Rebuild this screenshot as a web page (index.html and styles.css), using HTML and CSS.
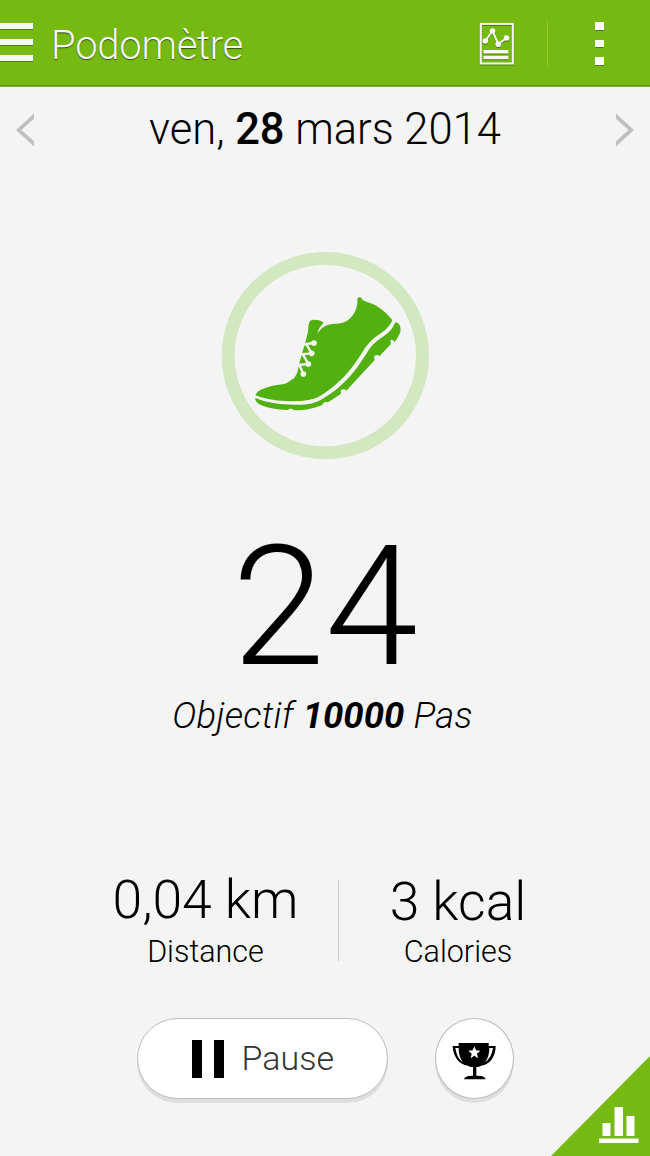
FILE: index.html
```html
<!DOCTYPE html>
<html lang="fr">
<head>
  <meta charset="UTF-8" />
  <meta name="viewport" content="width=device-width, initial-scale=1.0" />
  <title>Podomètre</title>
  <link rel="stylesheet" href="styles.css">
</head>
<body>
  <div class="app">
    <header class="topbar">
      <div class="menu"><span></span><span></span><span></span></div>
      <h1>Podomètre</h1>
      <svg class="log" width="36" height="46" viewBox="0 0 36 46">
        <g fill="none" stroke="#f7f7f7">
          <rect x="1.800" y="1.900" width="32" height="39.600" stroke-width="2"/>
          <path d="M6.300 19l7.200-10 5.700 13 8.300-6" stroke-width="1.900"/>
        </g>
        <g fill="#f7f7f7">
          <circle cx="6.300" cy="19" r="2.800"/>
          <circle cx="13.500" cy="9" r="2.800"/>
          <circle cx="19.200" cy="22.200" r="2.800"/>
          <circle cx="27.500" cy="16" r="2.800"/>
          <rect x="4.400" y="28" width="25" height="3.500"/>
          <rect x="4.400" y="33.800" width="25" height="3.400"/>
        </g>
      </svg>
      <span class="sep"></span>
      <div class="more"><span></span><span></span><span></span></div>
    </header>

    <div class="date">
      <svg width="19" height="34" viewBox="0 0 19 34"><path d="M18 0.500v5.200L5.500 17 18 28.300v5.200L0 17z" fill="#c0c0c0"/></svg>
      <p>ven, <b>28</b> mars 2014</p>
      <svg width="19" height="34" viewBox="0 0 19 34"><path d="M1 0.500v5.200l12.500 11.300L1 28.300v5.200L19 17z" fill="#c0c0c0"/></svg>
    </div>

    <main>
      <svg class="shoe" width="220" height="220" viewBox="0 0 660 660">
        <circle cx="331" cy="332" r="291.500" fill="none" stroke="#d2e8c0" stroke-width="39"/>
        <g fill="#52b110">
          <!-- upper -->
          <path d="M121 451C128 436 145 430 160 426C176 420 194 419 210 416C222 412 226 404 236 401C242 394 246 386 249 376L253 354L262 322L271 292L278 264C281 252 279 236 285 228C296 221 316 225 326 234C317 243 309 253 307 267C314 255 324 244 337 240C357 234 375 238 391 230C412 218 424 198 427 176L427 162C430 154 440 155 443 165C455 172 470 174 484 182C504 194 520 209 532 225C528 238 512 257 494 267C476 278 462 292 450 309C432 338 413 368 390 392C366 416 343 437 311 455C294 464 270 467 247 468C207 470 163 467 121 451Z"/>
          <!-- sole -->
          <path d="M121 459C154 473 200 480 247 479C280 479 303 474 323 461C356 443 381 420 405 394C430 365 447 337 463 312C475 295 490 284 507 273C524 262 535 248 541 232C553 233 559 246 556 260C552 272 545 284 538 292C537 285 529 282 526 287L528 297L493 334C489 327 480 330 477 335L479 345L394 437C389 431 380 432 377 437L378 446C362 457 348 466 338 472C332 469 324 471 322 480C299 489 270 497 237 496C233 490 223 489 219 495C184 494 143 487 127 473C122 468 120 463 121 459Z"/>
        </g>
        <!-- laces -->
        <g stroke="#f4f4f4" stroke-width="7" fill="none">
          <path d="M266 298l31-4M272 294l18 31M256 328l34-3M262 325l18 32M248 360l32-3M252 357l13 30"/>
        </g>
        <g fill="#f4f4f4">
          <circle cx="297" cy="294" r="8.500"/>
          <circle cx="290" cy="325" r="8.500"/>
          <circle cx="280" cy="357" r="8.500"/>
          <circle cx="265" cy="387" r="8.500"/>
        </g>
      </svg>
      <div class="count">24</div>
      <p class="goal">Objectif <b>10000</b> Pas</p>

      <div class="stats">
        <div class="stat distance">
          <strong>0,04 km</strong>
          <span>Distance</span>
        </div>
        <div class="stat calories">
          <strong>3 kcal</strong>
          <span>Calories</span>
        </div>
      </div>

      <div class="actions">
        <button class="pause"><i></i><i></i><span>Pause</span></button>
        <button class="trophy">
          <svg width="44" height="38" viewBox="0 0 132 114">
            <path d="M20 3h90v9h21c0 30-16 56-44 59-5 3-9 4-14 4v26c15 0 26 2 28 11H36c2-9 13-11 27-11V75c-6 0-11-1-15-4C20 68 3 42 2 12h18z"/>
            <path d="M10 18h10c0 17 4 32 13 43C20 52 13 37 10 18zM123 18h-11c0 17-4 32-13 43 13-9 21-24 24-43z" fill="#fff"/>
            <path d="M67 13l5 12 13 1-10 9 3 14-11-8-11 8 3-14-10-9 13-1z" fill="#fff"/>
          </svg>
        </button>
      </div>
    </main>

    <svg class="corner" width="100" height="100" viewBox="0 0 100 100">
      <path d="M100 0v100H1z" fill="#75b912"/>
      <path d="M52.500 67h8v13h-8zM64.500 51h8.500v29h-8.500zM76.500 60h8v20h-8zM49 82.500h39.500v4.500H49z" fill="#fff"/>
    </svg>
  </div>
</body>
</html>
```

FILE: styles.css
```css
* {
  box-sizing: border-box;
}
body {
  margin: 0;
  background: #f4f4f4;
  color: #000;
  font-family: Roboto, sans-serif;
  font-weight: 300;
}
h1, p {
  margin: 0;
  font-weight: 300;
}
.app {
  position: relative;
  width: 650px;
  height: 1156px;
  overflow: hidden;
}

/* top bar */
.topbar {
  display: flex;
  height: 87px;
  background: #75b912;
  border-bottom: 1px solid #80b530;
  box-shadow: inset 0 -1px #5c900f;
}
.menu {
  display: flex;
  flex-direction: column;
  gap: 10.5px;
  width: 33px;
  padding-top: 23px;
}
.menu span {
  height: 5.5px;
  background: #f7f7f7;
  box-shadow: 0 1px #4d7c0b;
}
.topbar h1 {
  width: 446px;
  padding-left: 18px;
  font-size: 40px;
  line-height: 91px;
  letter-spacing: -0.25px;
  color: #f7f7f7;
  text-shadow: 0 1px 1px #33500a;
}
.log {
  margin-top: 22px;
  filter: drop-shadow(0 1px 0 #4d7c0b);
}
.sep {
  width: 1px;
  height: 47px;
  margin: 20px 47px 0 32px;
  background: #8ec63e;
}
.more {
  display: flex;
  flex-direction: column;
  gap: 10px;
  padding-top: 22px;
}
.more span {
  width: 9px;
  height: 7.5px;
  background: #fff;
  box-shadow: 0 1px #4d7c0b;
}

.date {
  display: flex;
  align-items: center;
  justify-content: space-between;
  height: 86px;
  padding: 0 16px;
  font-size: 43.5px;
}
.date p {
  padding-bottom: 2px;
}
.date b {
  font-weight: 500;
}

main {
  display: flex;
  flex-direction: column;
  align-items: center;
}
.shoe {
  margin-top: 72px;
}
.count {
  margin-top: 72px;
  font-size: 167.5px;
  line-height: 140px;
}
.goal {
  margin-top: 17px;
  padding-right: 5px;
  font-size: 36.5px;
  line-height: 44px;
  letter-spacing: 0.25px;
  font-style: italic;
}
.goal b {
  font-weight: 700;
  letter-spacing: 0;
}

/* distance / calories */
.stats {
  display: flex;
  height: 81px;
  margin-top: 142px;
  width: 504px;
}
.stat {
  display: flex;
  flex-direction: column;
  align-items: center;
  width: 266px;
}
.stat strong {
  margin-top: -10px;
  font-size: 53.5px;
  font-weight: 300;
  line-height: 60px;
}
.stat span {
  margin-top: 6px;
  font-size: 30.5px;
  line-height: 32px;
}
.distance {
  border-right: 1px solid #c8c8c8;
}
.calories {
  width: 238px;
}
.calories strong {
  margin-top: -8px;
}
.calories span {
  margin-top: 4px;
}

/* buttons */
.actions {
  display: flex;
  gap: 47px;
  margin-top: 57px;
}
button {
  display: flex;
  align-items: center;
  height: 81px;
  padding: 0;
  border: 1px solid #bcbcbc;
  background: #fff;
  box-shadow: 0 4px 0 #dedede;
  font-family: inherit;
  font-weight: 300;
}
.pause {
  width: 251px;
  padding-left: 54px;
  border-radius: 41px;
  font-size: 34px;
  color: #333;
}
.pause i {
  width: 10.5px;
  height: 38px;
  margin-right: 11.5px;
  background: #000;
}
.pause i + i {
  margin-right: 17.5px;
}
.pause span {
  padding-bottom: 2px;
}
.trophy {
  justify-content: center;
  width: 79px;
  padding: 4px 1px 0 0;
  border-radius: 50%;
}

.corner {
  position: absolute;
  right: 0;
  bottom: 0;
}
```
